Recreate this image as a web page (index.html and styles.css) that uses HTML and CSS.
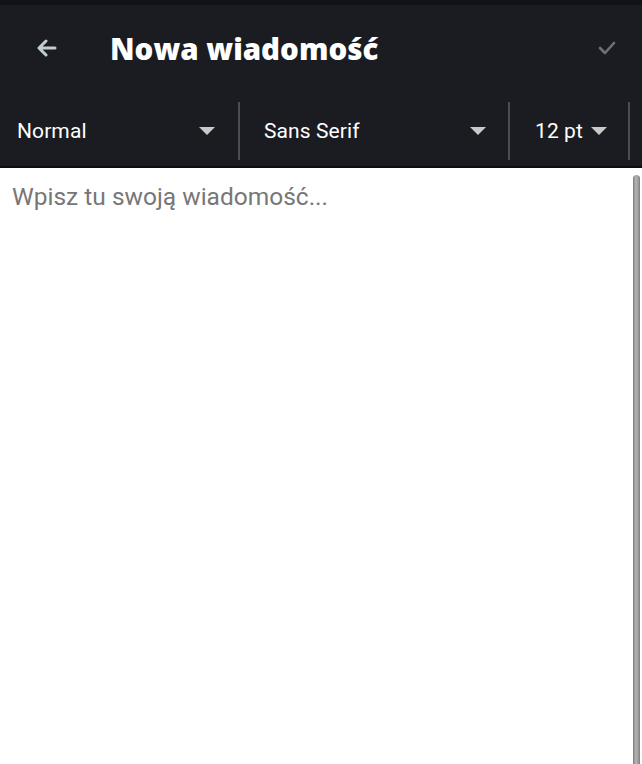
FILE: index.html
```html
<!DOCTYPE html>
<html lang="pl">
<head>
<meta charset="utf-8">
<title>Nowa wiadomość</title>
<link rel="stylesheet" href="styles.css">
</head>
<body>
<div class="app">
  <div class="topstrip"></div>
  <header class="appbar">
    <button class="icon-btn back" aria-label="Wstecz">
      <svg width="20" height="18" viewBox="0 0 20 18"><path d="M9 2 L2 9 L9 16 M2.5 9 H18" fill="none" stroke="#c3cbd4" stroke-width="3" stroke-linecap="round" stroke-linejoin="round"/></svg>
    </button>
    <h1 class="title">Nowa wiadomość</h1>
    <button class="icon-btn check" aria-label="Wyślij">
      <svg width="18" height="14" viewBox="0 0 18 14"><path d="M2 7 L7 12 L16 2" fill="none" stroke="#6b717c" stroke-width="2.6" stroke-linecap="round" stroke-linejoin="round"/></svg>
    </button>
  </header>
  <div class="toolbar">
    <div class="select s-style"><span>Normal</span><i class="tri"></i></div>
    <div class="select s-font"><span>Sans Serif</span><i class="tri"></i></div>
    <div class="select s-size"><span>12 pt</span><i class="tri"></i></div>
    <div class="select s-rest"></div>
  </div>
  <main class="editor">
    <div class="placeholder">Wpisz tu swoją wiadomość...</div>
    <div class="scrollbar"></div>
  </main>
</div>
</body>
</html>
```
FILE: styles.css
```css
* { box-sizing: border-box; }
html, body { margin: 0; padding: 0; height: 100%; }
body { background: #fff; font-family: Roboto, "Noto Sans", sans-serif; overflow: hidden; }
.app { display: flex; flex-direction: column; height: 764px; }
.topstrip { height: 5px; background: #111318; }
.appbar {
  height: 90px; background: #1a1c22;
  display: flex; align-items: center;
  padding: 0 0 4px 0;
}
.icon-btn { background: none; border: 0; padding: 0; display: flex; align-items: center; justify-content: center; }
.back { width: 28px; margin-left: 33px; }
.title {
  margin: 0 0 0 49px; flex: 1;
  font-family: "Open Sans", sans-serif; font-weight: 800; font-size: 29.5px;
  color: #fff; letter-spacing: 0;
}
.check { width: 18px; margin-right: 26px; }
.toolbar {
  height: 73px; background: #1a1c22;
  display: flex; align-items: center;
  border-bottom: 2px solid #0d0e11;
}
.select {
  height: 58px; display: flex; align-items: center;
  border-right: 2px solid #4a4d53;
  color: #fff; font-size: 21px; letter-spacing: 0.1px;
}
.select span { flex: 1; }
.s-style { width: 240px; padding-left: 17px; padding-right: 23px; }
.s-font { width: 270px; padding-left: 24px; padding-right: 22px; }
.s-size { width: 120px; padding-left: 25px; padding-right: 21px; }
.s-rest { width: 12px; border-right: 0; }
.tri {
  width: 0; height: 0;
  border-left: 8px solid transparent; border-right: 8px solid transparent;
  border-top: 8px solid #c9c9c9;
}
.editor { flex: 1; position: relative; padding: 14px 12px 0; }
.placeholder { color: #777; font-size: 24.5px; letter-spacing: 0; }
.scrollbar {
  position: absolute; right: 2px; top: 7px; bottom: 0; width: 7px;
  border-radius: 4px 4px 0 0;
  background: linear-gradient(to right, #7a7a7a, #b5b5b5 40%, #a0a0a0 70%, #7d7d7d);
}
```
